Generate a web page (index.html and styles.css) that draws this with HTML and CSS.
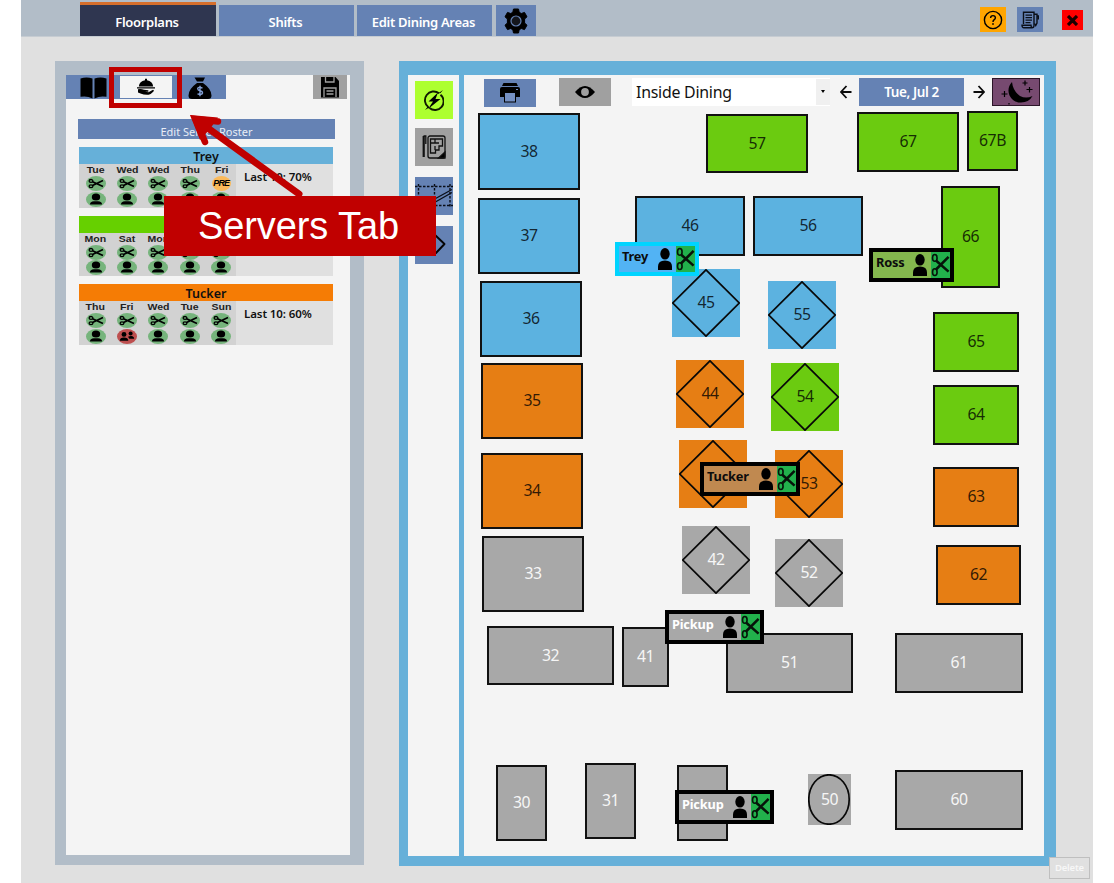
FILE: index.html
```html
<!DOCTYPE html>
<html lang="en">
<head>
<meta charset="utf-8">
<title>Floorplans</title>
<link rel="stylesheet" href="styles.css">
</head>
<body>
<svg class="sprite" aria-hidden="true">
  <symbol id="cut" viewBox="0 0 20 24">
    <g fill="none" stroke="#06140a"><ellipse cx="4" cy="4.500" rx="2.400" ry="3.500" stroke-width="1.700"/><ellipse cx="4" cy="19.500" rx="2.400" ry="3.500" stroke-width="1.700"/>
    <path d="M5.500 7.500L18.500 19M5.500 16.500L18.500 3.500" stroke-width="2.700"/></g>
  </symbol>
  <symbol id="person" viewBox="0 0 14 22">
    <ellipse cx="7" cy="5.800" rx="4.700" ry="5.800"/><path d="M0 22V18.500Q0 12.500 7 12.500T14 18.500V22Z"/>
  </symbol>
  <symbol id="badge-cut" viewBox="0 0 20 15">
    <ellipse cx="10" cy="7.500" rx="10" ry="7.500" fill="#76b47c"/>
    <g fill="none" stroke="#000" stroke-width="1.300"><ellipse cx="5" cy="4.900" rx="1.900" ry="1.400"/><ellipse cx="5" cy="10.300" rx="1.900" ry="1.400"/></g>
    <path d="M6.500 5.800L17 10.600M6.500 9.400L17 4.400" stroke="#000" stroke-width="1.700"/>
  </symbol>
  <symbol id="badge-one" viewBox="0 0 20 15">
    <ellipse cx="10" cy="7.500" rx="10" ry="7.500" fill="#76b47c"/>
    <ellipse cx="10" cy="5" rx="4.200" ry="3.600"/><path d="M4 12.400Q4 9.400 8 9.200H12Q16 9.400 16 12.400Z"/>
  </symbol>
  <symbol id="badge-two" viewBox="0 0 20 15">
    <ellipse cx="10" cy="7.500" rx="10" ry="7.500" fill="#bd4f4f"/>
    <circle cx="7" cy="5.400" r="2.400"/><path d="M2.800 11.800Q2.800 8.400 7 8.400T11.300 11.800Z"/>
    <circle cx="13.600" cy="4.600" r="2"/><path d="M11 7.800Q13 6.800 15.500 7.200Q17.200 7.800 17.200 9.800H12.300Z"/>
  </symbol>
</svg>

<div class="app">
  <header class="topbar">
    <nav class="tabs">
      <div class="tab tab-active">Floorplans</div>
      <div class="tab">Shifts</div>
      <div class="tab">Edit Dining Areas</div>
      <div class="tab tab-gear">
        <svg width="26" height="26" viewBox="0 0 26 26"><path d="M10.500 1H15.500L16.200 4.300L18.300 5.500L21.500 4.400L24 8.800L21.600 11V15L24 17.200L21.500 21.600L18.300 20.500L16.200 21.700L15.500 25H10.500L9.800 21.700L7.700 20.500L4.500 21.600L2 17.200L4.400 15V11L2 8.800L4.500 4.400L7.700 5.500L9.800 4.300Z" stroke="#000" stroke-linejoin="round"/><circle cx="13" cy="13" r="5" fill="#14161c" stroke="#6582b4" stroke-width="1.200"/></svg>
      </div>
    </nav>
    <div class="window-tools">
      <div class="tool help"><svg width="20" height="20" viewBox="0 0 20 20" fill="none" stroke="#000" stroke-width="1.400"><circle cx="10" cy="10" r="8.600"/><path d="M7.600 8Q7.600 5.600 10 5.600T12.400 7.800Q12.400 9 11 9.900Q10 10.600 10 12"/><path d="M10 13.300V14.800" stroke-width="1.700"/></svg></div>
      <div class="tool notes"><svg width="18" height="18" viewBox="0 0 18 18" fill="none" stroke="#0b0f18" stroke-width="1.400"><path d="M2.500 13V1.200H13V14.500Q13 16.700 11 16.700H3Q1 16.700 1 14.300H10Q10 16.500 11.300 16.700"/><path d="M4.500 4.200H11M4.500 6.700H11M4.500 9.200H11M4.500 11.700H9.500" stroke-width="1.200"/><path d="M13 3.200H16V12L14.700 14.500L13.500 12.500M16 5H17.500V8.500"/></svg></div>
      <div class="tool close"><svg width="11" height="11" viewBox="0 0 11 11"><path d="M1 1L10 10M10 1L1 10" stroke="#1c0000" stroke-width="3.200"/></svg></div>
    </div>
  </header>

  <main class="workspace">
    <aside class="roster">
      <div class="roster-tabs">
        <div class="rtab book"><svg width="27" height="22" viewBox="0 0 27 22"><path d="M0.500 1.500Q6.500 -0.500 12.500 1.500V21.500Q7 18.500 0.500 19.800ZM14.500 1.500Q20.500 -0.500 26.500 1.500V19.800Q20 18.500 14.500 21.500Z"/></svg></div>
        <div class="rtab servers"><svg width="18" height="18" viewBox="0 0 18 18"><path d="M1.800 8.500Q2.500 3 8 2.200V0.800H10V2.200Q15.500 3 16.200 8.500ZM0 9.200H18V10.400H0ZM1 11.300Q4 10.700 7 11.800L11 12.200Q12.500 12.900 11 13.700H8L11.500 14.200L16 11.800Q17.500 12 16.500 13.400Q13.500 16.600 11.500 16.800Q6.500 17 4.200 15.700L1 14.500Z"/></svg></div>
        <div class="rtab money"><svg width="24" height="22" viewBox="0 0 24 22"><path d="M6.500 0.500H17L15 4.500H9ZM9 6H15Q23.500 12 23.500 18.500Q23.500 22 20 22H4Q0.500 22 0.500 18.500Q0.500 12 9 6Z"/><path d="M14.500 11.200Q10 9.200 9.700 11.700Q9.800 13.300 12 13.700Q14.600 14.200 14.500 16Q14 18.200 9.500 16.900M12 8.800V19.300" fill="none" stroke="#83a0d5" stroke-width="1.400"/></svg></div>
        <div class="save"><svg width="20" height="22" viewBox="0 0 20 22"><path d="M1 1H15.500L19 5V21.500H1Z"/><path d="M5.500 1V6H14V1M4 21V12H16V21M6.500 15H13.500M6.500 18H13.500" fill="none" stroke="#a0a0a0" stroke-width="1.300"/></svg></div>
      </div>
      <div class="edit-roster">Edit Server Roster</div>
      <div class="cards" id="cards"></div>
    </aside>

    <section class="planner">
      <div class="modes">
        <div class="mode auto"><svg width="20" height="22" viewBox="0 0 20 22"><path d="M4.500 18.300A8.400 8.400 0 0 1 15 4.200M16.500 5.700A8.400 8.400 0 0 1 5.500 19" fill="none" stroke="#101b00" stroke-width="1.900"/><path d="M14 3.500L4.500 12.500H9L4 20L16.500 10H11.500ZM16.500 4L19 1L14 4.500ZM3.500 18L1 21L6 18Z"/></svg></div>
        <div class="mode plan"><svg width="24" height="24" viewBox="0 0 24 24" fill="none" stroke="#111" stroke-width="1.300"><path d="M1.700 1V22" stroke-width="2.200"/><path d="M1.500 1H3.800V9"/><rect x="6" y="1" width="17" height="22" rx="2"/><path d="M8.500 4H20.500V11H17V15H13.500V18H8.500ZM8.500 8H13V4M13 8H17M13 11V15"/><path d="M23 17L16.500 23H23Z" fill="#000"/></svg></div>
        <div class="mode"><svg width="38" height="38" viewBox="0 0 38 38" fill="none" stroke="#0a0e18"><path d="M0 9.500H38M0 28.500H38M3.500 7V31M19.500 7V31M35 7V31" stroke-width="1.400" stroke-dasharray="2.500 1.500"/><path d="M16 24L37 12.500M16 27.500L37 15.500" stroke-width="1.300"/></svg></div>
        <div class="mode"><svg width="38" height="38" viewBox="0 0 38 38" fill="none" stroke="#050505" stroke-width="1.900" stroke-linejoin="round"><path d="M9 18L19 8L29.500 18L21 27H18Z"/></svg></div>
      </div>
      <div class="floor">
        <div class="floor-tools">
          <div class="print"><svg width="20" height="20" viewBox="0 0 20 20"><path d="M3.500 0H16.500L18 3H2ZM2 4H18Q20 4 20 6V14H16V9H4V14H0V6Q0 4 2 4ZM5 10H15V19H5Z"/><rect x="4.500" y="9.500" width="11" height="9.500" fill="#7590c2" stroke="#000"/><path d="M16 6.500H18" stroke="#7590c2"/></svg></div>
          <div class="view"><svg width="20" height="12" viewBox="0 0 20 12"><path d="M0 6Q10 -6 20 6Q10 18 0 6Z"/><circle cx="10" cy="6" r="3.900" fill="#a0a0a0"/></svg></div>
          <div class="area"><span>Inside Dining</span><i class="caret"></i></div>
          <svg class="arrow" width="12" height="14" viewBox="0 0 12 14"><path d="M6.500 1L1 7L6.500 13M1 7H11.500"/></svg>
          <div class="date">Tue, Jul 2</div>
          <svg class="arrow" width="12" height="14" viewBox="0 0 12 14"><path d="M5.500 1L11 7L5.500 13M11 7H0.500"/></svg>
          <div class="night"><svg width="46" height="26" viewBox="0 0 46 26"><path d="M19 3Q13.500 9 16.500 16.500Q20 23.500 28 23.500Q36 23.500 39.500 17Q33 20 27 17Q20 12 19 3Z"/><path d="M32 1.500V6.500M29.500 4H34.500M36.500 8V13.500M33.500 10.500H39.500M11.500 12V18M8.500 15H14.500M16 24V25.500" stroke="#000" stroke-width="1.200"/></svg></div>
        </div>
        <div class="canvas" id="canvas"></div>
      </div>
    </section>
  </main>
  <div class="delete">Delete</div>
</div>

<div class="highlight"></div>
<svg class="pointer" width="130" height="100" viewBox="0 0 130 100"><path d="M119 92L18 19" stroke-width="7"/><path d="M10 13L38 15.500L30 27L20 38Z" fill="#c00000" stroke="none"/><path d="M25 40L15.500 17L38 19.500" stroke-width="6.500"/></svg>
<div class="callout">Servers Tab</div>
<script src="app.js"></script>
</body>
</html>
```
FILE: styles.css
```css
* { box-sizing: border-box; }
body { margin: 0; width: 1114px; height: 883px; overflow: hidden; position: relative; background: #fff; font-family: "Noto Sans", "Open Sans", sans-serif; }
svg { display: block; flex: none; }
.sprite { position: absolute; width: 0; height: 0; }

.app { position: relative; width: 1072px; height: 883px; margin-left: 21px; background: #e0e0e0; }
.topbar { display: flex; justify-content: space-between; height: 37px; padding-left: 59px; background: #b2bdc8; border-bottom: 1px solid #c6ccd2; }
.tabs { display: flex; gap: 3px; align-items: flex-end; }
.tab { display: flex; align-items: center; justify-content: center; width: 135px; height: 31px; background: #6582b4; color: #fff; font-size: 13px; letter-spacing: -.3px; font-weight: 600; padding: 2px 2px 0 0; }
.tab-active { width: 136px; height: 34px; background: #2f3650; border-top: 3px solid #d66f2d; }
.tab-gear { width: 40px; padding: 0; margin-left: 1px; }
.window-tools { display: flex; align-items: flex-start; padding: 7px 10px 0 0; }
.tool { display: flex; align-items: center; justify-content: center; width: 26px; height: 25px; }
.help { background: #ffa500; margin-right: 11px; }
.notes { background: #6582b4; margin-right: 19px; }
.close { width: 21px; height: 20px; margin-top: 3px; background: #f00; }

.workspace { display: flex; gap: 35px; padding: 24px 0 0 34px; }
.roster { width: 309px; height: 804px; border: solid #b2bdc8; border-width: 14px 14px 10px 11px; background: #f4f4f4; }
.roster-tabs { display: flex; height: 24px; }
.rtab { display: flex; align-items: center; justify-content: center; height: 24px; background: #6582b4; }
.book { width: 54px; padding-top: 2px; }
.servers { width: 52px; background: #f4f4f4; border: solid #6582b4; border-width: 1px 0; }
.money { width: 54px; padding: 2px 0 0 2px; }
.save { display: flex; align-items: center; justify-content: center; width: 34px; height: 24px; margin-left: 87px; background: #a0a0a0; }
.edit-roster { display: flex; justify-content: center; align-items: center; width: 257px; height: 20px; margin: 20px 0 8px 12px; padding-top: 4px; background: #6582b4; color: #e8edf6; font-size: 11px; }
.cards { display: flex; flex-direction: column; gap: 8px; margin-left: 13px; }
.card { width: 254px; height: 60.500px; background: #e0e0e0; }
.card-name { height: 17px; line-height: 20px; text-align: center; font-size: 12.500px; font-weight: 600; color: #101010; }
.c-blue { background: #66b0d9; }
.c-green { background: #66d000; }
.c-orange { background: #f57c05; }
.card-body { display: flex; }
.days { display: grid; grid-template-columns: repeat(5, 31.400px); width: 157px; height: 43.500px; padding-left: 1px; background: #d2d2d2; }
.day { display: flex; flex-direction: column; align-items: center; }
.day span { height: 12px; font: 700 9px/12px "Liberation Sans", sans-serif; color: #222; transform: scaleX(1.170); }
.day svg { width: 20px; height: 15px; margin-top: .300px; }
.pre { display: flex; justify-content: center; width: 19px; height: 15px; margin-top: .300px; border-radius: 50%; background: #fab95a; font: italic 700 9px/15px "Liberation Sans", sans-serif; letter-spacing: -.8px; color: #000; }
.score { padding: 5px 0 0 8px; font-size: 11.500px; letter-spacing: -.1px; line-height: 16px; font-weight: 600; color: #111; white-space: nowrap; }

.planner { display: flex; gap: 5px; width: 657px; height: 805px; border: solid #66b0d9; border-width: 14px 12px 10px 9px; background: #66b0d9; }
.modes { width: 51px; background: #f4f4f4; padding: 6px 0 0 7px; }
.mode { display: flex; align-items: center; justify-content: center; width: 38px; height: 38px; margin-bottom: 11px; background: #6582b4; }
.auto { background: #adff2f; margin-bottom: 9px; }
.plan { background: #a0a0a0; }
.floor { flex: 1; background: #f4f4f4; }
.floor-tools { display: flex; align-items: center; height: 33px; padding-left: 20px; }
.floor-tools > div { display: flex; align-items: center; justify-content: center; height: 28px; }
.print { width: 52px; margin-top: 2px; background: #6582b4; }
.view { width: 52px; margin-left: 23px; background: #a0a0a0; }
.floor-tools > .area { width: 198px; margin-left: 21px; padding-left: 4px; justify-content: space-between; background: #fff; font-size: 15.900px; letter-spacing: -.25px; color: #111; }
.caret { width: 14px; height: 26px; background: #f0f0f0; display: flex; align-items: center; justify-content: center; }
.caret::after { content: ""; border: 2px solid transparent; border-top: 3px solid #000; border-bottom: 0; }
.arrow { fill: none; stroke: #0b0b0b; stroke-width: 1.800; margin-left: 10px; }
.date { width: 105px; margin: 0 0 0 7px; background: #6582b4; color: #fff; font-size: 13.500px; letter-spacing: -.4px; font-weight: 600; }
.arrow + .date + .arrow { margin-left: 9px; }
.night { width: 48px; margin-left: 7px; background: #774a70; border: 1px solid #2b1528; }

/* floor canvas: free placement of tables and server tags */
.canvas { position: relative; width: 580px; height: 748px; }
.table { position: absolute; display: flex; align-items: center; justify-content: center; font-size: 15.800px; border: 2px solid #111; color: rgba(0, 0, 0, .8); padding-bottom: 2px; letter-spacing: -.5px; }
.table span { position: relative; }
.blue { background: #5cb2e0; }
.green { background: #6bcb10; }
.orange { background: #e67e14; }
.grey { background: #a8a8a8; color: #f6f6f6; }
.shape { border: 0; }
.shape svg { position: absolute; inset: 0; width: 100%; height: 100%; fill: none; stroke: #080808; stroke-width: 1.700; }
.tag { position: absolute; display: flex; height: 34px; border: 4px solid #000; padding-left: 3px; font-size: 12.800px; letter-spacing: -.2px; font-weight: 700; line-height: 21px; color: #0c0c0c; }
.tag span { flex: 1; }
.tag .who { width: 14px; height: 22px; margin: 2px 4px 0 0; }
.tag .cut { width: 19px; height: 26px; background: #22b14c; padding: 1px 0; }
.tag-trey { border-color: #00d4ff; background: #52b3f4; }
.tag-ross { background: #84b74e; }
.tag-tucker { background: #c08950; }
.tag-pickup { background: #a8a8a8; color: #fff; }

.delete { position: absolute; left: 1028px; top: 857px; width: 41px; height: 22px; border: 1px solid #bfbfbf; background: #e0e0e0; color: #f7f7f7; font-size: 9.500px; font-weight: 600; line-height: 20px; text-align: center; letter-spacing: -.2px; }
.highlight { position: absolute; left: 109px; top: 67px; width: 73px; height: 41px; border: 5px solid #c00000; }
.pointer { position: absolute; left: 180px; top: 102px; fill: none; stroke: #c00000; stroke-linecap: round; stroke-linejoin: miter; }
.callout { position: absolute; left: 164px; top: 196px; width: 272px; height: 60px; background: #c00000; color: #fff; font: 38px/60px "Liberation Sans", sans-serif; text-align: center; letter-spacing: -.1px; padding-right: 3px; }
```
FILE: app.js
```js
const FLOOR_X = 464, FLOOR_Y = 108;

// id, left, top, right, bottom, colour, shape
const tables = [
  ['38', 478, 113, 580, 190, 'blue'], ['37', 478, 198, 580, 274, 'blue'], ['36', 480, 281, 582, 357, 'blue'],
  ['35', 481, 363, 583, 439, 'orange'], ['34', 481, 453, 583, 529, 'orange'], ['33', 482, 536, 584, 612, 'grey'],
  ['32', 487, 626, 614, 685, 'grey'], ['41', 622, 627, 669, 687, 'grey'], ['51', 726, 633, 853, 693, 'grey'],
  ['61', 895, 633, 1023, 693, 'grey'], ['60', 895, 770, 1023, 830, 'grey'],
  ['30', 496, 765, 547, 841, 'grey'], ['31', 585, 763, 636, 839, 'grey'], ['', 677, 765, 728, 841, 'grey'],
  ['57', 706, 114, 808, 173, 'green'], ['67', 857, 112, 959, 172, 'green'], ['67B', 967, 111, 1018, 171, 'green'],
  ['46', 635, 196, 745, 256, 'blue'], ['56', 753, 196, 863, 256, 'blue'], ['66', 941, 186, 1000, 288, 'green'],
  ['65', 933, 312, 1019, 372, 'green'], ['64', 933, 385, 1019, 445, 'green'],
  ['63', 933, 467, 1019, 527, 'orange'], ['62', 936, 545, 1021, 605, 'orange'],
  ['45', 672, 269, 740, 337, 'blue', 'd'], ['55', 768, 281, 836, 349, 'blue', 'd'],
  ['44', 676, 360, 744, 428, 'orange', 'd'], ['54', 771, 363, 839, 431, 'green', 'd'],
  ['', 679, 440, 747, 508, 'orange', 'd'], ['53', 775, 450, 843, 518, 'orange', 'd'],
  ['42', 682, 526, 750, 594, 'grey', 'd'], ['52', 775, 539, 843, 607, 'grey', 'd'],
  ['50', 808, 774, 851, 825, 'grey', 'o']
];
const tags = [
  ['Trey', 615, 242, 84], ['Ross', 869, 248, 85], ['Tucker', 700, 462, 100],
  ['Pickup', 665, 610, 99], ['Pickup', 675, 790, 99]
];
const outlines = {
  d: '<svg viewBox="0 0 68 68"><path d="M34 .8L67.200 34L34 67.200L.8 34Z"/></svg>',
  o: '<svg viewBox="0 0 43 51"><ellipse cx="21" cy="25.500" rx="20.200" ry="24.700"/></svg>'
};

document.getElementById('canvas').innerHTML =
  tables.map(([id, l, t, r, b, colour, shape]) =>
    `<div class="table ${colour}${shape ? ' shape' : ''}" style="left:${l - FLOOR_X}px;top:${t - FLOOR_Y}px;width:${r - l}px;height:${b - t}px">${shape ? outlines[shape] : ''}<span>${id}</span></div>`).join('') +
  tags.map(([name, l, t, w]) =>
    `<div class="tag tag-${name.toLowerCase()}" style="left:${l - FLOOR_X}px;top:${t - FLOOR_Y}px;width:${w}px"><span>${name}</span><svg class="who"><use href="#person"/></svg><svg class="cut"><use href="#cut"/></svg></div>`).join('');

// each day: label, cut status, section type
const servers = [
  { name: 'Trey', colour: 'c-blue', score: 'Last 10: 70%', days: [['Tue'], ['Wed'], ['Wed'], ['Thu'], ['Fri', 'pre']] },
  { name: '', colour: 'c-green', score: '', days: [['Mon'], ['Sat'], ['Mon'], [''], ['']] },
  { name: 'Tucker', colour: 'c-orange', score: 'Last 10: 60%', days: [['Thu'], ['Fri', 'cut', 'two'], ['Wed'], ['Tue'], ['Sun']] }
];
const badge = kind => `<svg><use href="#badge-${kind}"/></svg>`;
document.getElementById('cards').innerHTML = servers.map(s =>
  `<div class="card"><div class="card-name ${s.colour}">${s.name}</div><div class="card-body"><div class="days">${
    s.days.map(([d, status = 'cut', kind = 'one']) =>
      `<div class="day"><span>${d}</span>${status === 'pre' ? '<b class="pre">PRE</b>' : badge('cut')}${badge(kind)}</div>`).join('')
  }</div><div class="score">${s.score}</div></div></div>`).join('');
```
